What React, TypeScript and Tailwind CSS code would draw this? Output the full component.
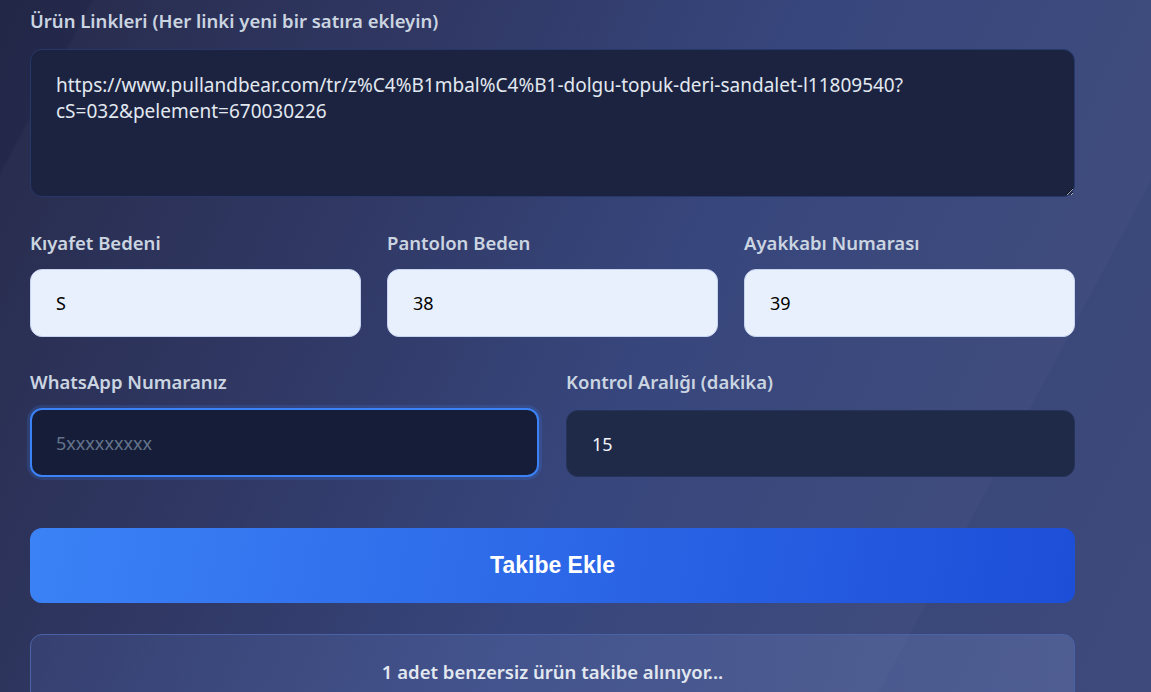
import React from 'react';

const label = "block text-[18.5px] leading-6 font-semibold text-[#cbd5e1]";
const lightInput =
  "h-[68px] w-full rounded-xl border border-[#c7d4f0] bg-[#e8f0fe] px-[25px] text-[18px] text-black outline-none";

const url =
  "https://www.pullandbear.com/tr/z%C4%B1mbal%C4%B1-dolgu-topuk-deri-sandalet-l11809540?cS=032&pelement=670030226";

export default function App() {
  return (
    <div
      className="min-h-[692px] h-[692px] overflow-hidden bg-[linear-gradient(115deg,#222646_0%,#2b3360_30%,#32427a_55%,#3a4779_80%,#3f4a7c_100%)] font-['Noto_Sans','Open_Sans',sans-serif]"
    >
      <div className="relative h-full w-full bg-[linear-gradient(118deg,transparent_0%,transparent_6%,rgba(255,255,255,0.025)_6.2%,rgba(255,255,255,0.025)_82%,transparent_82.2%)]">
        <div className="ml-[30px] w-[1045px] pt-[9px]">
          <label className={label}>Ürün Linkleri (Her linki yeni bir satıra ekleyin)</label>
          <textarea
            defaultValue={url}
            className="mt-4 block h-[148px] w-full rounded-xl border border-[#26386a] bg-[#1b2340] px-[25px] py-[22px] text-[19px] leading-[26px] text-[#e2e8f0] outline-none"
          />

          <div className="mt-[34px] grid grid-cols-3 gap-x-[26px]">
            <div>
              <label className={label}>Kıyafet Bedeni</label>
              <input defaultValue="S" className={`mt-[14px] ${lightInput}`} />
            </div>
            <div>
              <label className={label}>Pantolon Beden</label>
              <input defaultValue="38" className={`mt-[14px] ${lightInput}`} />
            </div>
            <div>
              <label className={label}>Ayakkabı Numarası</label>
              <input defaultValue="39" className={`mt-[14px] ${lightInput}`} />
            </div>
          </div>

          <div className="mt-[33px] grid grid-cols-2 gap-x-[27px]">
            <div>
              <label className={label}>WhatsApp Numaranız</label>
              <input
                placeholder="5xxxxxxxxx"
                className="mt-[14px] h-[69px] w-full rounded-xl border-2 border-[#3b82f6] bg-[#161d38] px-[24px] text-[18px] text-[#e2e8f0] shadow-[0_0_0_3px_rgba(59,130,246,0.18)] outline-none placeholder:text-[#64748b]"
              />
            </div>
            <div>
              <label className={label}>Kontrol Aralığı (dakika)</label>
              <input
                defaultValue="15"
                className="mt-[16px] h-[67px] w-full rounded-xl border border-[#263358] bg-[#1f2948] px-[25px] text-[18px] text-[#f1f5f9] outline-none"
              />
            </div>
          </div>

          <button className="mt-[51px] flex h-[75px] w-full items-center justify-center rounded-xl bg-[linear-gradient(100deg,#3b82f6,#1d4ed8)] font-['Liberation_Sans',Arial,sans-serif] text-[23px] font-bold text-white">
            Takibe Ekle
          </button>

          <div className="mt-[31px] flex h-[80px] items-start justify-center rounded-xl border border-[#4a63a8] bg-[linear-gradient(90deg,rgba(80,100,170,0.25),rgba(110,130,190,0.35))] pt-[23px]">
            <span className="text-[18.5px] font-semibold text-[#e2e8f0]">
              1 adet benzersiz ürün takibe alınıyor...
            </span>
          </div>
        </div>
      </div>
    </div>
  );
}
